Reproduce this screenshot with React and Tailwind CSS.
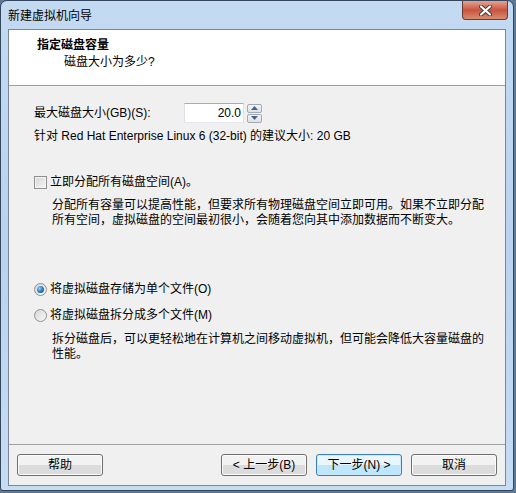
import React from "react";

const font = { fontFamily: '"Liberation Sans", "Noto Sans CJK SC", sans-serif' };

function WinButton({ children, primary }) {
  return (
    <button
      className={
        "w-[86px] h-[22px] rounded-[3px] border text-[12px] leading-none text-black " +
        (primary
          ? "border-[#3c7fb1] bg-gradient-to-b from-[#eaf6fd] from-50% to-[#bee6fd] to-50% shadow-[inset_0_0_0_1px_#c6e8fb]"
          : "border-[#707070] bg-gradient-to-b from-[#f2f2f2] from-50% to-[#dcdcdc] to-50% shadow-[inset_0_0_0_1px_#fcfcfc]")
      }
    >
      {children}
    </button>
  );
}

function Spinner() {
  return (
    <div className="flex items-center gap-[3px]">
      <div className="w-[60px] h-[20px] border border-[#abadb3] border-b-[#e3e9ef] border-x-[#dbdfe6] bg-white flex items-center justify-end pr-[2px] text-[12px]">
        20.0
      </div>
      <div className="flex flex-col gap-[1px]">
        <div className="w-[15px] h-[9px] border border-[#a0a9b6] rounded-[2px] bg-gradient-to-b from-[#f4f4f4] to-[#dde1e7] flex items-center justify-center">
          <svg width="7" height="4" viewBox="0 0 7 4"><path d="M0 4 L3.5 0 L7 4 Z" fill="#4d6185" /></svg>
        </div>
        <div className="w-[15px] h-[9px] border border-[#a0a9b6] rounded-[2px] bg-gradient-to-b from-[#f4f4f4] to-[#dde1e7] flex items-center justify-center">
          <svg width="7" height="4" viewBox="0 0 7 4"><path d="M0 0 L3.5 4 L7 0 Z" fill="#4d6185" /></svg>
        </div>
      </div>
    </div>
  );
}

function Radio({ checked }) {
  return (
    <span className="w-[13px] h-[13px] rounded-full border border-[#8e8f8f] bg-gradient-to-br from-[#d8d8d8] to-[#f8f8f8] flex items-center justify-center shrink-0">
      {checked && (
        <span className="w-[7px] h-[7px] rounded-full bg-[radial-gradient(circle_at_35%_35%,#8fd3f8,#1a6fb5_60%,#0c4f8a)]" />
      )}
    </span>
  );
}

export default function App() {
  return (
    <div className="w-[516px] h-[493px] bg-[#5f7893] overflow-hidden text-black" style={font}>
      <div className="w-[514px] h-[491px] rounded-t-[7px] rounded-b-[3px] border border-[#34475c] bg-gradient-to-b from-[#c3daf2] via-[#b9d3ee] to-[#c6dcf3] flex flex-col">
        <div className="h-[28px] flex items-start justify-between pl-[7px] pr-[5px]">
          <span className="text-[12px] leading-[14px] mt-[8px]">新建虚拟机向导</span>
          <div className="w-[46px] h-[19px] rounded-b-[4px] border border-t-0 border-[#6e3a30] bg-gradient-to-b from-[#e5a293] via-[#c8533f] to-[#d88c6e] flex items-center justify-center">
            <svg width="13" height="11" viewBox="0 0 13 11">
              <path d="M2 1.5 L11 9.5 M11 1.5 L2 9.5" stroke="#3b3b3b" strokeWidth="4" strokeLinecap="round" />
              <path d="M2 1.5 L11 9.5 M11 1.5 L2 9.5" stroke="#ffffff" strokeWidth="2.2" strokeLinecap="round" />
            </svg>
          </div>
        </div>

        <div className="mx-[7px] h-[457px] border border-[#7a8797] flex flex-col bg-[#f0f0f0] text-[12px] leading-[15px]">
          <div className="h-[56px] bg-white border-b border-[#a0a0a0] pl-[28px] pt-[8px]">
            <div className="font-bold">指定磁盘容量</div>
            <div className="pl-[27px] mt-[2px]">磁盘大小为多少?</div>
          </div>

          <div className="flex-1 pl-[25px] pr-[20px] pt-[17px]">
            <div className="flex items-center h-[20px]">
              <span className="w-[150px]">最大磁盘大小(GB)(S):</span>
              <Spinner />
            </div>
            <div className="mt-[6px]">针对 Red Hat Enterprise Linux 6 (32-bit) 的建议大小: 20 GB</div>

            <div className="mt-[31px] flex items-center gap-[3px]">
              <span className="w-[13px] h-[13px] border border-[#8e8f8f] bg-gradient-to-br from-[#d6d6d6] to-[#f6f6f6] shadow-[inset_0_0_0_1px_#f4f4f4] shrink-0" />
              <span>立即分配所有磁盘空间(A)。</span>
            </div>
            <div className="mt-[8px] ml-[18px]">
              分配所有容量可以提高性能，但要求所有物理磁盘空间立即可用。如果不立即分配
              <br />
              所有空间，虚拟磁盘的空间最初很小，会随着您向其中添加数据而不断变大。
            </div>

            <div className="mt-[54px] flex items-center gap-[3px]">
              <Radio checked />
              <span>将虚拟磁盘存储为单个文件(O)</span>
            </div>
            <div className="mt-[11px] flex items-center gap-[3px]">
              <Radio />
              <span>将虚拟磁盘拆分成多个文件(M)</span>
            </div>
            <div className="mt-[9px] ml-[18px]">
              拆分磁盘后，可以更轻松地在计算机之间移动虚拟机，但可能会降低大容量磁盘的
              <br />
              性能。
            </div>
          </div>

          <div className="border-t border-[#a0a0a0] h-[41px] flex items-center px-[8px]">
            <WinButton>帮助</WinButton>
            <div className="flex-1" />
            <div className="flex gap-[9px]">
              <WinButton>&lt; 上一步(B)</WinButton>
              <WinButton primary>下一步(N) &gt;</WinButton>
              <WinButton>取消</WinButton>
            </div>
          </div>
        </div>
      </div>
    </div>
  );
}
